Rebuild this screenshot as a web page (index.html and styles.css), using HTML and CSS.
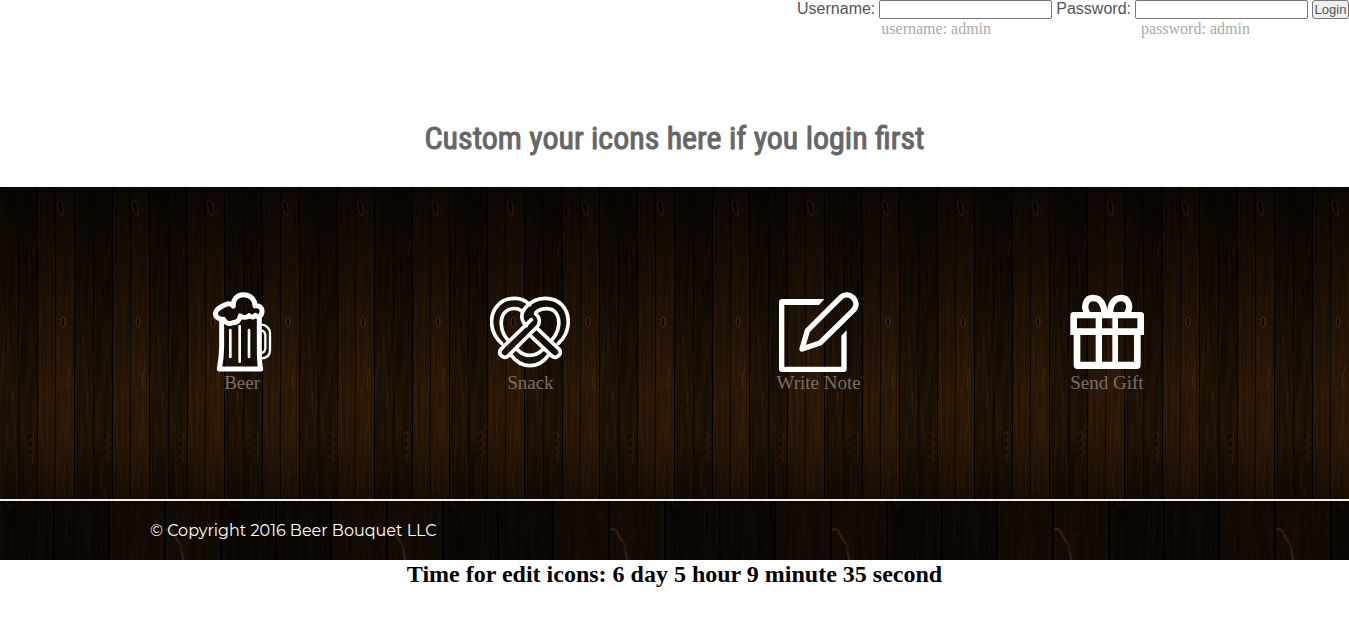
FILE: index.html
```html
<!DOCTYPE html>
<html lang="en">
<head>
<meta charset="utf-8">
<title>Beer Bouquet</title>
<link rel="stylesheet" href="styles.css">
</head>
<body>
<form class="login">
  <label class="login-label" for="user">Username:</label>
  <div class="field"><input class="login-input" id="user" type="text"><span class="hint hint-user">username: admin</span></div>
  <label class="login-label" for="pass">Password:</label>
  <div class="field"><input class="login-input" id="pass" type="password"><span class="hint hint-pass">password: admin</span></div>
  <button class="login-button" type="button">Login</button>
</form>
<h1 class="title">Custom your icons here if you login first</h1>
<main class="hero">
  <svg class="wood" aria-hidden="true">
    <defs>
      <filter id="grain" x="0" y="0" width="100%" height="100%" color-interpolation-filters="sRGB">
        <feTurbulence type="fractalNoise" baseFrequency=".45 .015" numOctaves="3" seed="8"/>
        <feColorMatrix values="0 0 0 0 .45  0 0 0 0 .23  0 0 0 0 .07  1.3 0 0 0 -.5"/>
      </filter>
      <linearGradient id="shade" x1="0" y1="0" x2="0" y2="1">
        <stop offset="0" stop-color="#000" stop-opacity=".75"/>
        <stop offset=".3" stop-color="#000" stop-opacity=".45"/>
        <stop offset=".65" stop-color="#000" stop-opacity=".08"/>
        <stop offset=".8" stop-color="#000" stop-opacity=".1"/>
        <stop offset="1" stop-color="#000" stop-opacity=".5"/>
      </linearGradient>
      <pattern id="planks" width="75" height="312" patternUnits="userSpaceOnUse">
        <path fill="#1b1004" d="M0 0H75V312H0z"/>
        <path fill="#180e03" d="M18 0H37V312H18z"/>
        <path fill="#271606" d="M37 0H56V312H37z"/>
        <path fill="#2b1806" d="M56 0H75V312H56z"/>
        <path filter="url(#grain)" opacity=".42" d="M0 0H75V312H0z"/>
        <path stroke="#050200" stroke-opacity=".75" fill="none" d="M18.500 0V312M55.500 0V312"/>
        <path stroke="#030100" fill="none" d="M37.500 0V312M74.500 0V312"/>
        <g fill="#140a03" stroke="#8a4f18" stroke-opacity=".8">
          <path stroke-opacity="1" d="M57 15q6-3 6 7t-2 6q-3-3-4-13z"/>
          <ellipse cx="63" cy="135" rx="2" ry="5"/>
          <path fill="none" stroke-opacity=".3" d="M35 54q-3 8-1 16M70 180q-4 10-2 22M28 247q6-7 5 5M28 255q6-7 5 5M28 263q6-7 5 5M28 271q6-7 5 5M12 205q3 5 0 10M65 282q-5 14 0 22"/>
        </g>
      </pattern>
    </defs>
    <rect width="100%" height="100%" fill="url(#planks)"/>
    <rect width="100%" height="100%" fill="url(#shade)"/>
  </svg>
  <a class="item" href="#beer">
    <svg class="icon" viewBox="36 36 240 240" aria-hidden="true">
      <g fill="none" stroke="#fff" stroke-width="15" stroke-linecap="round" stroke-linejoin="round">
        <path d="M102 120C85 118 73 108 77 97C81 84 95 80 106 74C114 70 123 70 130 78C128 60 140 44 160 44C181 44 196 60 195 78C207 74 217 84 216 95C215 109 204 114 196 106C190 114 180 110 177 107C169 115 157 112 151 108C148 124 137 128 128 128C116 134 105 128 101 118"/>
        <path d="M95 118V200C95 230 91 250 88 267H212C208 250 208 230 208 200V110"/>
        <path stroke-width="8" d="M121 150V231M149 138V245M177 150V231"/>
        <path stroke-width="7" d="M212 134C230 134 240 147 240 160V210C240 228 228 235 212 235M212 151C222 151 226 160 226 165V204C226 213 220 219 212 219"/>
      </g>
    </svg>
    <span class="label">Beer</span>
  </a>
  <a class="item" href="#snack">
    <svg class="icon" viewBox="42 36 240 240" aria-hidden="true">
      <g fill="none" stroke="#fff" stroke-width="11" stroke-linecap="round" stroke-linejoin="round">
        <path d="M161 74C138 48 92 49 66 75C36 108 42 160 77 190"/>
        <path d="M151 137C131 119 135 96 152 79C182 48 231 48 258 75C286 106 283 158 247 190"/>
        <path d="M97 182C70 152 72 115 85 99C99 82 126 82 138 94"/>
        <path d="M180 97C198 82 228 82 240 99C255 121 250 156 226 182"/>
        <path d="M166 119L74 208C65 221 80 238 95 229L183 141C194 130 191 110 179 102"/>
        <path d="M184 146L250 208C259 221 244 238 229 229L162 166"/>
        <path d="M106 226C136 267 188 267 217 226M124 209C147 232 176 232 200 209"/>
      </g>
    </svg>
    <span class="label">Snack</span>
  </a>
  <a class="item" href="#note">
    <svg class="icon" viewBox="39 36 240 240" aria-hidden="true">
      <path fill="#fff" d="M175 57L159 75H55V260H226V167L242 151V267Q242 276 233 276H48Q39 276 39 267V67Q39 57 49 57Z"/>
      <path fill="none" stroke="#fff" stroke-width="16" stroke-linejoin="round" d="M108 207L124 152L224 52C248 29 288 65 261 92L162 189Z"/>
    </svg>
    <span class="label">Write Note</span>
  </a>
  <a class="item" href="#gift">
    <svg class="icon" viewBox="36 36 240 240" aria-hidden="true">
      <path fill="#fff" fill-rule="evenodd" d="M56 96H257Q267 96 267 106V165H257V256Q257 267 246 267H67Q56 267 56 256V165H46V106Q46 96 56 96ZM66 115V145H122V115ZM141 115V145H172V115ZM189 115V145H247V115ZM76 165V245H122V165ZM141 165V245H172V165ZM189 165V245H237V165Z"/>
      <path fill="none" stroke="#fff" stroke-width="19" d="M98 103C83 80 93 54 114 54C138 54 148 75 148 104M215 103C230 80 220 54 199 54C175 54 165 75 165 104"/>
    </svg>
    <span class="label">Send Gift</span>
  </a>
</main>
<footer class="footer">
  <svg class="wood" aria-hidden="true">
    <defs>
      <pattern id="boards" width="222" height="59" patternUnits="userSpaceOnUse">
        <path fill="#070401" d="M0 0H222V59H0z"/>
        <path fill="#0f0803" d="M110 0H222V59H110z"/>
        <path filter="url(#grain)" opacity=".16" d="M0 0H222V59H0z"/>
        <path stroke="#000" stroke-width="2" d="M54 0V59M109 0V59M165 0V59M221 0V59"/>
        <path fill="none" stroke="#4a3018" stroke-opacity=".6" stroke-width="2" d="M166 29q5-3 8 4t5 8t4 18"/>
        <path fill="none" stroke="#1e1108" d="M170 30q7 2 10 13t7 16M180 31q4 3 13 2M185 36q-3 9 3 16M7 0q1 9 6 4"/>
      </pattern>
    </defs>
    <rect width="100%" height="100%" fill="url(#boards)"/>
  </svg>
  <p class="copyright">© Copyright 2016 Beer Bouquet LLC</p>
</footer>
<p class="timer">Time for edit icons: 6 day 5 hour 9 minute 35 second</p>
</body>
</html>
```
FILE: styles.css
```css
body {
  margin: 0;
  background: #fff;
  font-family: "Liberation Serif", "Times New Roman", serif;
}
.login {
  display: flex;
  justify-content: flex-end;
  align-items: flex-start;
  gap: 4px;
}
.login-label {
  font: 16px/18px "Liberation Sans", Arial, sans-serif;
  color: #555;
}
.field {
  display: flex;
  flex-direction: column;
}
.login-input {
  box-sizing: border-box;
  width: 173px;
  height: 19px;
  padding: 1px 2px;
  border: 1px solid #767676;
  border-radius: 2px;
  background: #fff;
}
.hint {
  padding-left: 2px;
  font-size: 16px;
  line-height: 20px;
  color: #aaa;
}
.hint-pass {
  padding-left: 6px;
}
.login-button {
  box-sizing: border-box;
  width: 37px;
  height: 19px;
  padding: 0 1px;
  border: 1px solid #767676;
  border-radius: 3px;
  background: #efefef;
  font: 13px/16px "Liberation Sans", Arial, sans-serif;
  color: #555;
}
.title {
  margin: 78px 0 28px;
  font: 400 32px/42px "Roboto Condensed", "Liberation Sans Narrow", Roboto, sans-serif;
  -webkit-text-stroke: 1px #666;
  text-align: center;
  color: #666;
}
.hero {
  position: relative;
  display: flex;
  padding: 105px 98px;
  border-bottom: 2px solid #eee;
  background: #140b03;
}
.wood {
  position: absolute;
  inset: 0;
  width: 100%;
  height: 100%;
}
.item {
  position: relative;
  flex: 1;
  display: flex;
  flex-direction: column;
  align-items: center;
  text-decoration: none;
}
.icon {
  width: 80px;
  height: 80px;
}
.label {
  font-size: 19px;
  line-height: 22px;
  color: #777069;
}
.footer {
  position: relative;
  padding: 18px 150px;
  background: #0a0501;
}
.copyright {
  position: relative;
  margin: 0;
  font: 16px/23px Montserrat, Inter, sans-serif;
  color: #fff;
}
.timer {
  margin: 0;
  font-size: 24px;
  font-weight: bold;
  line-height: 28px;
  text-align: center;
  color: #000;
}
```
